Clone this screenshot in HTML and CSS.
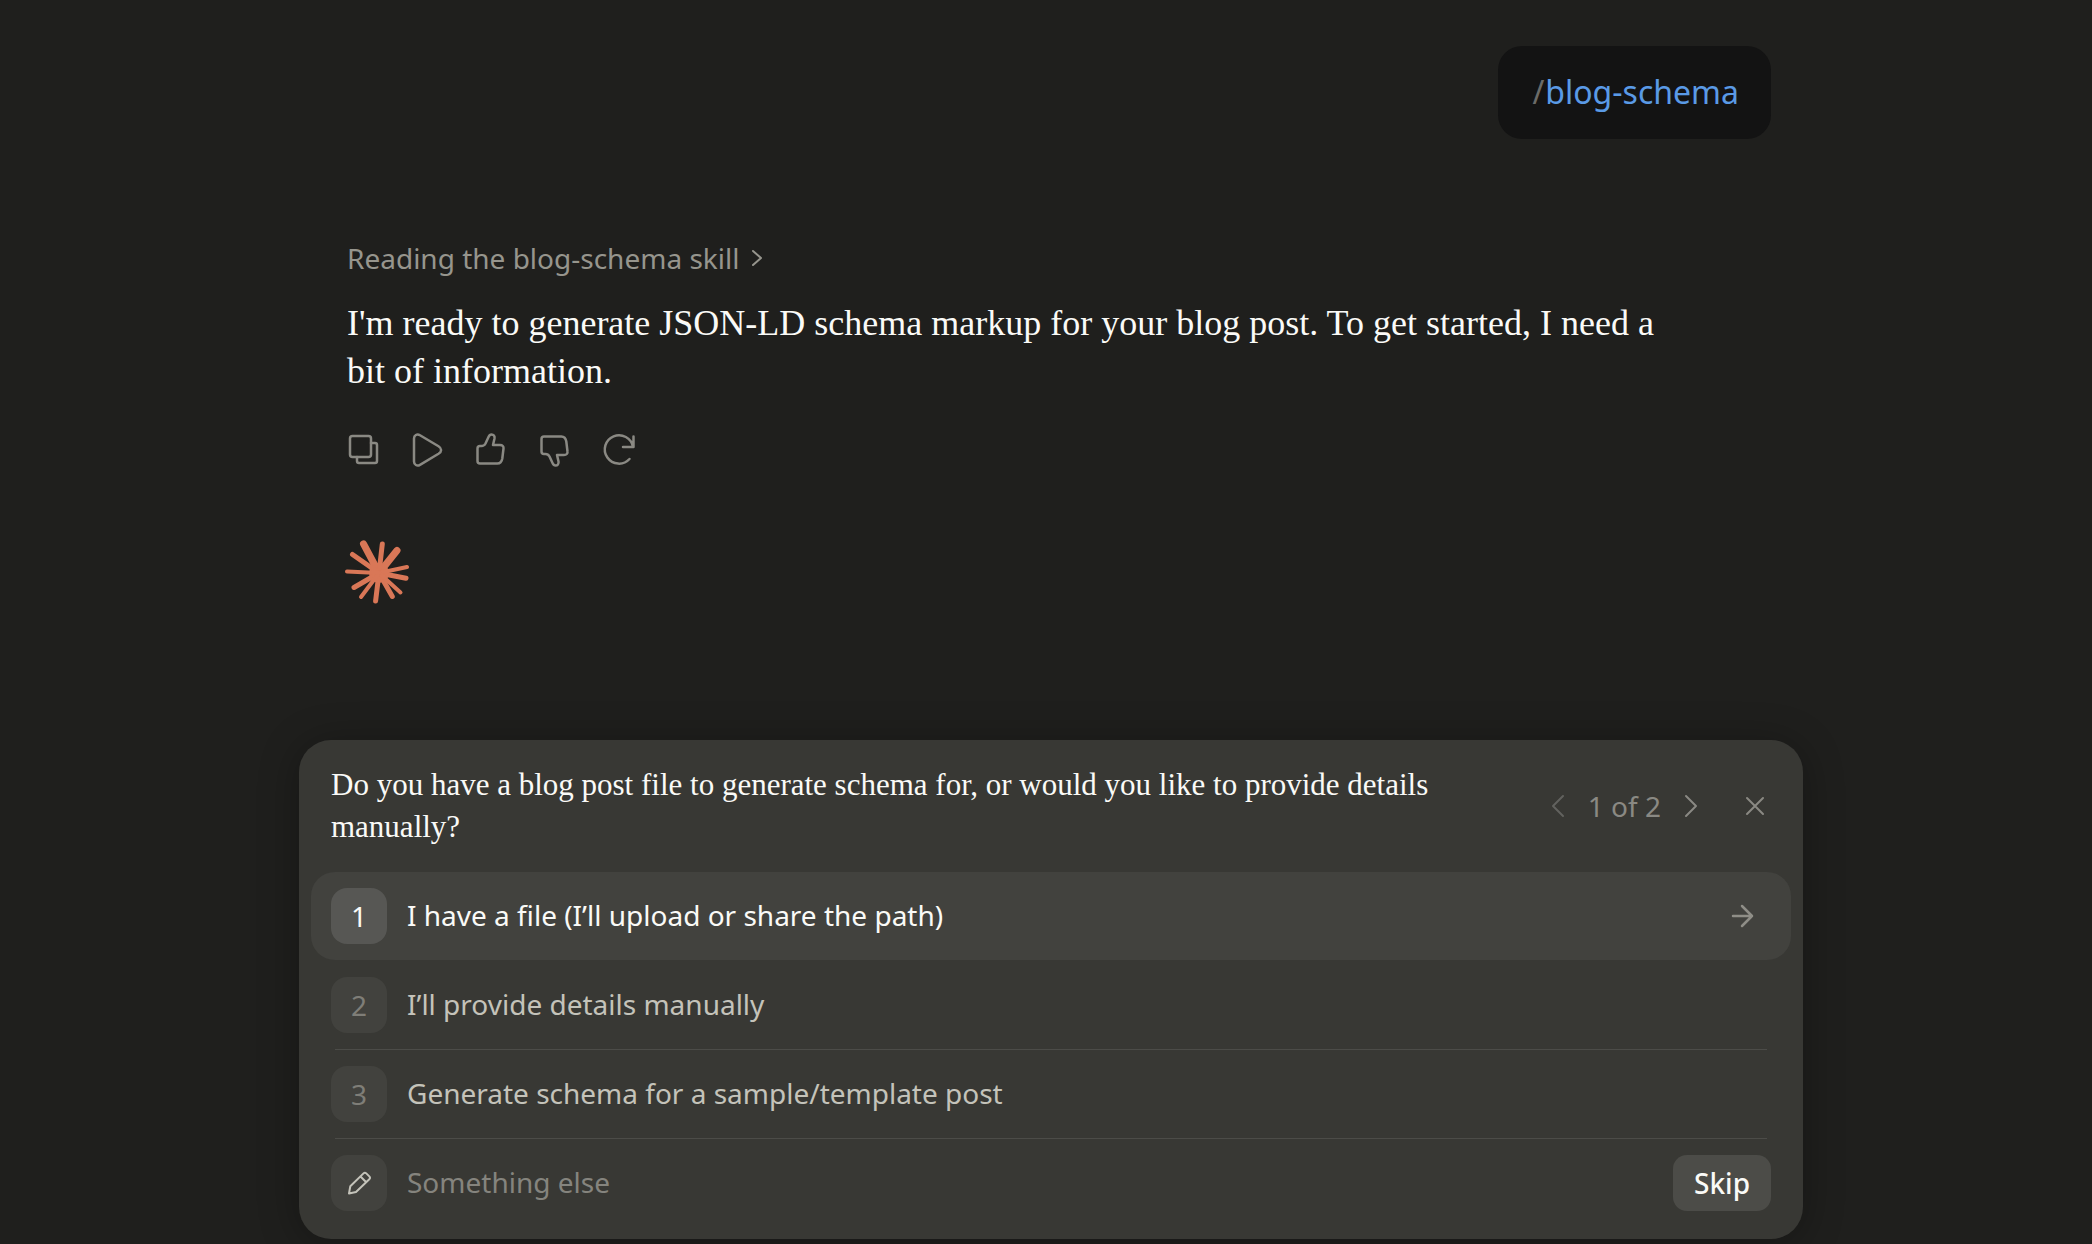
FILE: index.html
```html
<!DOCTYPE html>
<html lang="en">
  <head>
    <meta charset="utf-8">
    <title>Blog schema</title>
    <link rel="stylesheet" href="styles.css">
  </head>
  <body>
    <main class="thread">
      <div class="bubble"><span class="slash">/</span>blog-schema</div>

      <button class="status" type="button">
        Reading the blog-schema skill
        <svg class="icon-small" viewBox="0 0 20 20"><path d="M6 3l8 7-8 7" /></svg>
      </button>

      <p class="message">I'm ready to generate JSON-LD schema markup for your blog post. To get started, I need a bit of information.</p>

      <div class="actions">
        <button type="button" aria-label="Copy">
          <svg viewBox="0 0 40 40"><rect x="7" y="6" width="21" height="21" rx="2.500" /><path d="M28 13h4a2 2 0 0 1 2 2v16a2 2 0 0 1-2 2H16a2 2 0 0 1-2-2v-4" /></svg>
        </button>
        <button type="button" aria-label="Read aloud">
          <svg viewBox="0 0 40 40"><path d="M7 8.500v23c0 3.300 3 5 6 3.300l18.500-11c3.500-2.200 3.500-5.400 0-7.600l-18.500-11c-3-1.700-6 0-6 3.300z" /></svg>
        </button>
        <button type="button" aria-label="Good response">
          <svg viewBox="0 0 40 40"><path d="M6.500 31V18.500a2.500 2.500 0 0 1 2.500-2.500h1.500c2 0 3.200-1 4-2.500l3-6.500c.7-1.500 1.500-2.500 3-2.500 2 0 3.500 1.500 3 4L22 15h7c2.500 0 3.800 1.500 3.500 3.500l-1.200 10c-.5 3-2 5-5 5H9A2.500 2.500 0 0 1 6.500 31z" /></svg>
        </button>
        <button type="button" aria-label="Bad response">
          <svg viewBox="0 0 40 40"><path d="M6.500 9v12.500A2.500 2.500 0 0 0 9 24h1.500c2 0 3.200 1 4 2.500l3 6.500c.7 1.500 1.500 2.500 3 2.500 2 0 3.500-1.500 3-4L22 25h7c2.500 0 3.800-1.500 3.500-3.500l-1.200-10c-.5-3-2-5-5-5H9A2.500 2.500 0 0 0 6.500 9z" /></svg>
        </button>
        <button type="button" aria-label="Retry">
          <svg viewBox="0 0 40 40"><path d="M34.500 6.500v10.500H24M34 17A14.200 14.200 0 1 0 30.500 29" /></svg>
        </button>
      </div>

      <svg class="spark" viewBox="0 0 64 64">
        <circle cx="34" cy="33" r="10" />
        <g class="thick"><path d="M34 33L18.500 3.800" /><path d="M34 33L52 10.500" /></g>
        <g class="mid"><path d="M34 33L37.300 4" /><path d="M34 33L61 38.300" /><path d="M34 33L47.300 56.500" /><path d="M34 33L30.600 61" /><path d="M34 33L9 47.500" /><path d="M34 33L7.500 14.500" /></g>
        <g class="thin"><path d="M34 33L62 27" /><path d="M34 33L55.500 52.500" /><path d="M34 33L16 57" /><path d="M34 33L2 31.600" /></g>
      </svg>
    </main>

    <form class="panel">
      <div class="panel-header">
        <h1>Do you have a blog post file to generate schema for, or would you like to provide details manually?</h1>
        <div class="pager">
          <button type="button" aria-label="Previous" disabled><svg viewBox="0 0 32 32"><path d="M21 6L11 16l10 10" /></svg></button>
          <span>1 of 2</span>
          <button type="button" aria-label="Next"><svg viewBox="0 0 32 32"><path d="M11 6l10 10-10 10" /></svg></button>
        </div>
        <button class="close" type="button" aria-label="Close"><svg viewBox="0 0 32 32"><path d="M8 8l16 16M24 8L8 24" /></svg></button>
      </div>

      <button class="option active" type="button">
        <span class="badge">1</span>
        <span class="label">I have a file (I’ll upload or share the path)</span>
        <svg class="arrow" viewBox="0 0 32 32"><path d="M6 16h19M15 6l10 10-10 10" /></svg>
      </button>
      <button class="option" type="button">
        <span class="badge">2</span>
        <span class="label">I’ll provide details manually</span>
      </button>
      <hr>
      <button class="option" type="button">
        <span class="badge">3</span>
        <span class="label">Generate schema for a sample/template post</span>
      </button>
      <hr>
      <div class="option">
        <label class="badge" for="other" aria-label="Something else">
          <svg viewBox="0 0 24 24"><path d="M2 22.500l1.300-7.200L16.500 2.400a2 2 0 0 1 2.800 0l3 3a2 2 0 0 1 0 2.800L9 21zM13.500 5.500l5.500 5.500" /></svg>
        </label>
        <input id="other" type="text" placeholder="Something else">
        <button class="skip" type="button">Skip</button>
      </div>
    </form>
  </body>
</html>
```
FILE: styles.css
```css
* {
  box-sizing: border-box;
}
body {
  margin: 0;
  min-height: 100vh;
  padding: 46px 0 5px 10px;
  display: flex;
  flex-direction: column;
  align-items: center;
  background-color: #1f1f1d;
  color: #fafaf7;
  font-family: "Noto Sans", sans-serif;
  font-size: 28px;
}
button,
input {
  border: none;
  padding: 0;
  background: none;
  color: inherit;
  font: inherit;
}
button {
  cursor: pointer;
}
svg {
  display: block;
  fill: none;
  stroke: currentColor;
  stroke-width: 2;
  stroke-linecap: round;
  stroke-linejoin: round;
}

/* conversation */
.thread {
  width: 100%;
  max-width: 1440px;
  flex: 1;
  display: flex;
  flex-direction: column;
  align-items: flex-start;
}
.bubble {
  align-self: flex-end;
  padding: 22px 32px 23px;
  border-radius: 24px;
  background-color: #131313;
  color: #5a9ae6;
  font-size: 32px;
  line-height: 48px;
}
.slash {
  padding: 0 1px 0 2px;
  color: #6b6b68;
}
.status {
  display: flex;
  align-items: center;
  gap: 8px;
  margin: 99px 16px 0;
  line-height: 40px;
  color: #96958d;
}
.icon-small {
  width: 20px;
  height: 20px;
}
.message {
  margin: 21px 16px 0;
  max-width: 1336px;
  font-family: "Liberation Serif", serif;
  font-size: 36px;
  line-height: 48px;
}
.actions {
  display: flex;
  margin-top: 23px;
  color: #8a8983;
}
.actions button {
  width: 64px;
  height: 64px;
  padding: 12px;
}
.actions svg {
  stroke-width: 2.5;
}
.spark {
  width: 64px;
  height: 64px;
  margin: 58px 14px 0;
  color: #d97757;
}
.spark circle {
  fill: currentColor;
  stroke: none;
}
.thick {
  stroke-width: 7;
}
.mid {
  stroke-width: 5;
}
.thin {
  stroke-width: 4;
}

/* question panel */
.panel {
  width: 100%;
  max-width: 1504px;
  padding: 24px 12px 12px;
  border-radius: 32px;
  background-color: #383834;
  box-shadow: 0 4px 40px rgba(0, 0, 0, 0.3);
}
.panel-header {
  display: flex;
  align-items: center;
  padding: 0 20px 24px;
  color: #8a8983;
}
h1 {
  flex: 1;
  margin: 0;
  padding-right: 88px;
  color: #fafaf7;
  font-family: "Liberation Serif", serif;
  font-size: 31px;
  font-weight: normal;
  line-height: 42px;
}
.pager {
  display: flex;
  align-items: center;
  gap: 14px;
}
.pager svg,
.close svg,
.arrow {
  width: 32px;
  height: 32px;
}
.pager button:disabled {
  color: #62625e;
}
.close {
  margin-left: 32px;
}
.option {
  display: flex;
  align-items: center;
  gap: 20px;
  width: 100%;
  height: 88px;
  padding: 0 20px;
  border-radius: 24px;
  color: #c4c3ba;
  text-align: left;
}
.option.active {
  margin-bottom: 1px;
  background-color: #42423e;
  color: #fafaf7;
}
hr {
  width: calc(100% - 48px);
  height: 1px;
  margin: 0 auto;
  border: none;
  background-color: #4c4c48;
}
.badge {
  display: flex;
  align-items: center;
  justify-content: center;
  width: 56px;
  height: 56px;
  border-radius: 16px;
  background-color: #42423e;
  color: #7f7e78;
}
.active .badge {
  background-color: #575754;
  color: #fafaf7;
}
.badge svg {
  width: 24px;
  height: 24px;
  color: #c4c3ba;
}
.label {
  flex: 1;
  padding-bottom: 2px;
}
.arrow {
  margin-right: 12px;
  stroke-width: 2.5;
  color: #8f8e87;
}
.option input {
  flex: 1;
  min-width: 0;
  padding-bottom: 2px;
}
.option input::placeholder {
  color: #85847e;
  opacity: 1;
}
.skip {
  height: 56px;
  padding: 0 21px;
  border-radius: 14px;
  background-color: #4c4c48;
  color: #fafaf7;
  font-weight: 500;
}
```
